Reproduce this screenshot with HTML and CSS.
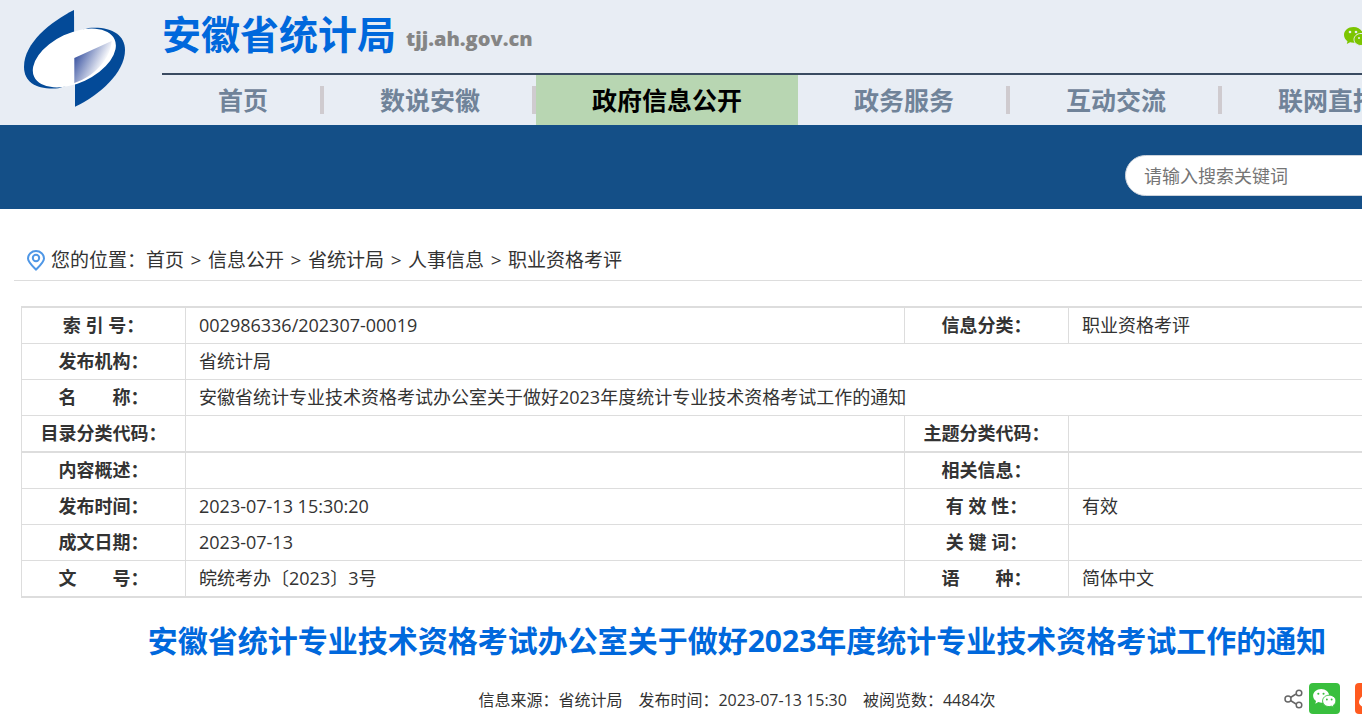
FILE: index.html
```html
<!DOCTYPE html>
<html lang="zh-CN">
<head>
    <meta charset="UTF-8">
    <meta name="viewport" content="width=device-width, initial-scale=1.0">
    <title>安徽省统计局</title>
    <link rel="stylesheet" href="styles.css">
</head>
<body>
    <div class="page">
        <header class="header">
            <a href="#" class="logo" aria-label="安徽省统计局">
                <svg width="101" height="97" viewBox="72 30 303 291">
                    <defs>
                        <linearGradient id="fold" gradientUnits="userSpaceOnUse" x1="215" y1="175" x2="300" y2="218">
                            <stop offset="0" stop-color="#2f4a9c"/>
                            <stop offset="1" stop-color="#ffffff"/>
                        </linearGradient>
                    </defs>
                    <path fill="#034a98" d="M222 30C150 66 72 130 72 200C72 248 112 270 175 265L223 250Z"/>
                    <path fill="#034a98" d="M225 320C298 286 375 218 375 150C375 102 330 78 265 84L225 98Z"/>
                    <ellipse cx="223" cy="174" rx="133" ry="75" transform="rotate(-25 223 174)" fill="#fff"/>
                    <path fill="url(#fold)" d="M223 174L335 123C332 175 285 228 223 249Z"/>
                </svg>
            </a>
            <div class="header-main">
                <div class="header-top">
                    <div class="site-name">
                        <span class="site-title">安徽省统计局</span>
                        <span class="site-domain">tjj.ah.gov.cn</span>
                    </div>
                    <a href="#" class="wechat-link" aria-label="微信">
                        <svg width="24" height="20" viewBox="0 0 24 20">
                            <path fill="#7cc500" d="M9.500 0C4.200 0 0 3.500 0 8c0 2.600 1.400 4.700 3.500 6.200L2.800 17l3.300-1.700 3.400.5C14.700 15.800 19 12.300 19 8S14.700 0 9.500 0z"/>
                            <path fill="#7cc500" stroke="#e8edf4" d="M17 6.500c-4 0-7 2.700-7 6s3 6 7 6l2.500-.4 2.300 1.300-.5-2.200c1.700-1.200 2.700-2.800 2.700-4.700 0-3.300-3-6-7-6z"/>
                            <circle cx="6" cy="5" r="1.300" fill="#e8edf4"/>
                            <circle cx="12" cy="5" r="1.300" fill="#e8edf4"/>
                            <circle cx="15" cy="11" r="1" fill="#e8edf4"/>
                            <circle cx="20" cy="11" r="1" fill="#e8edf4"/>
                        </svg>
                    </a>
                </div>
                <nav class="nav">
                    <a href="#">首页</a>
                    <a href="#">数说安徽</a>
                    <a href="#" class="active">政府信息公开</a>
                    <a href="#">政务服务</a>
                    <a href="#">互动交流</a>
                    <a href="#">联网直报</a>
                </nav>
            </div>
        </header>

        <div class="banner">
            <form class="search">
                <input type="text" placeholder="请输入搜索关键词" aria-label="搜索">
            </form>
        </div>

        <main class="content">
            <div class="breadcrumb">
                <svg class="pin" width="18" height="21" viewBox="0 0 18 21" fill="none" stroke="#4f97e6" stroke-width="2">
                    <path d="M9 19.500C5 15.500 1 12 1 8.500a8 7.500 0 0 1 16 0C17 12 13 15.500 9 19.500z"/>
                    <circle cx="9" cy="8" r="3.200"/>
                </svg>
                <span>您的位置：</span>
                <a href="#">首页</a><span class="sep">&gt;</span>
                <a href="#">信息公开</a><span class="sep">&gt;</span>
                <a href="#">省统计局</a><span class="sep">&gt;</span>
                <a href="#">人事信息</a><span class="sep">&gt;</span>
                <a href="#">职业资格考评</a>
            </div>

            <table class="info">
                <colgroup>
                    <col class="col-label">
                    <col class="col-wide">
                    <col class="col-label">
                    <col>
                </colgroup>
                <tbody>
                    <tr>
                        <th>索 引 号：</th>
                        <td>002986336/202307-00019</td>
                        <th>信息分类：</th>
                        <td>职业资格考评</td>
                    </tr>
                    <tr>
                        <th>发布机构：</th>
                        <td colspan="3">省统计局</td>
                    </tr>
                    <tr>
                        <th>名　　称：</th>
                        <td colspan="3">安徽省统计专业技术资格考试办公室关于做好2023年度统计专业技术资格考试工作的通知</td>
                    </tr>
                    <tr>
                        <th>目录分类代码：</th>
                        <td></td>
                        <th>主题分类代码：</th>
                        <td></td>
                    </tr>
                </tbody>
                <tbody>
                    <tr>
                        <th>内容概述：</th>
                        <td></td>
                        <th>相关信息：</th>
                        <td></td>
                    </tr>
                    <tr>
                        <th>发布时间：</th>
                        <td>2023-07-13 15:30:20</td>
                        <th>有 效 性：</th>
                        <td>有效</td>
                    </tr>
                    <tr>
                        <th>成文日期：</th>
                        <td>2023-07-13</td>
                        <th>关 键 词：</th>
                        <td></td>
                    </tr>
                    <tr>
                        <th>文　　号：</th>
                        <td>皖统考办〔2023〕3号</td>
                        <th>语　　种：</th>
                        <td>简体中文</td>
                    </tr>
                </tbody>
            </table>

            <h1>安徽省统计专业技术资格考试办公室关于做好2023年度统计专业技术资格考试工作的通知</h1>

            <div class="meta">
                <div class="meta-text">
                    <span>信息来源：省统计局</span>
                    <span>发布时间：2023-07-13 15:30</span>
                    <span>被阅览数：4484次</span>
                </div>
                <div class="share">
                    <svg width="19" height="20" viewBox="0 0 19 20" fill="none" stroke="#666" stroke-width="1.500">
                        <path d="M6.500 8.500L12 5M6.500 11.500L12 15"/>
                        <circle cx="4" cy="10" r="3"/>
                        <circle cx="15" cy="4" r="2.800"/>
                        <circle cx="15" cy="16" r="2.800"/>
                    </svg>
                    <button type="button" class="share-wechat" aria-label="分享到微信">
                        <svg width="23" height="19" viewBox="0 0 24 20">
                            <path fill="#fff" d="M8.500 0C3.800 0 0 3.200 0 7.200c0 2.300 1.200 4.200 3.100 5.500L2.300 15.500l3.200-1.700 3 .6c4.700 0 8.500-3.200 8.500-7.200S13.200 0 8.500 0z"/>
                            <path fill="#fff" stroke="#39bf3e" d="M17 6.500c-4 0-7 2.700-7 6s3 6 7 6l2.500-.4 2.300 1.300-.5-2.200c1.700-1.200 2.700-2.800 2.700-4.700 0-3.300-3-6-7-6z"/>
                            <circle cx="5.500" cy="5" r="1.100" fill="#39bf3e"/>
                            <circle cx="11" cy="5" r="1.100" fill="#39bf3e"/>
                            <circle cx="14.500" cy="11" r="1" fill="#39bf3e"/>
                            <circle cx="19.500" cy="11" r="1" fill="#39bf3e"/>
                        </svg>
                    </button>
                    <button type="button" class="share-weibo" aria-label="分享到微博">
                        <svg width="23" height="20" viewBox="0 0 23 20">
                            <path fill="#fff" d="M9 4C5 5 0 9 0 13c0 4 5 6 9.500 6C15 19 19 16 19 13c0-2-2-3-3.500-3.500C16 6 14 5.500 10.500 7 11 5 10.500 3.700 9 4z"/>
                            <ellipse cx="9" cy="13" rx="6" ry="4" fill="#ff5a1f"/>
                        </svg>
                    </button>
                </div>
            </div>
        </main>
    </div>
</body>
</html>
```
FILE: styles.css
```css
:root {
    --header-bg: #e8edf4;
    --band-blue: #144f87;
    --title-blue: #0068dc;
    --line: #dddddd;
    --text: #333333;
}

* {
    box-sizing: border-box;
}

body {
    margin: 0;
    overflow: hidden;
    font-family: "Open Sans", "Noto Sans CJK SC", sans-serif;
    font-size: 18px;
    color: var(--text);
    background: #fff;
}

a {
    color: inherit;
    text-decoration: none;
}

.page {
    min-width: 1474px;
}

.header {
    display: flex;
    background: var(--header-bg);
}

.logo {
    flex: 0 0 162px;
    padding: 10px 0 0 24px;
}

.logo svg,
.wechat-link svg {
    display: block;
}

.header-main {
    flex: 1;
}

.header-top {
    display: flex;
    justify-content: space-between;
    align-items: center;
    height: 75px;
    padding-right: 106px;
    border-bottom: 2px solid #3a4b61;
}

.site-name {
    display: flex;
    align-items: flex-end;
    gap: 10px;
    padding-bottom: 6px;
    font-weight: bold;
}

.site-title {
    font-size: 39px;
    line-height: 48px;
    color: var(--title-blue);
}

.site-domain {
    font-size: 20px;
    font-weight: 800;
    line-height: 38px;
    color: #858585;
}

.nav {
    display: flex;
    height: 50px;
}

.nav a {
    padding: 0 56px;
    font-size: 25px;
    font-weight: bold;
    line-height: 50px;
    white-space: nowrap;
    color: #708399;
    background: linear-gradient(#cfcbcf, #cfcbcf) right center / 4px 28px no-repeat;
}

.nav a.active {
    color: #000;
    background: #b8d6b2;
}

.banner {
    display: flex;
    justify-content: flex-end;
    padding: 30px 29px 13px;
    background: var(--band-blue);
}

.search input {
    display: block;
    width: 320px;
    height: 41px;
    padding: 0 18px;
    border: 1px solid #ccd3dc;
    border-radius: 21px;
    font: inherit;
    background: #fff;
}

.search input::placeholder {
    color: #757575;
}

.content {
    margin: 31px 14px 0;
}

.breadcrumb {
    display: flex;
    align-items: center;
    padding-left: 13px;
    border-bottom: 1px solid var(--line);
    font-size: 19px;
    line-height: 40px;
}

.pin {
    margin-right: 6px;
}

.sep {
    width: 24px;
    text-align: center;
}

.info {
    width: calc(100% - 14px);
    margin: 25px 7px 0;
    border-collapse: collapse;
    table-layout: fixed;
}

.col-label {
    width: 164px;
}

.col-wide {
    width: 719px;
}

.info tbody {
    border-top: 2px solid var(--line);
    border-bottom: 2px solid var(--line);
}

.info th,
.info td {
    height: 36px;
    padding: 0 13px;
    border: 1px solid var(--line);
    line-height: 34px;
    text-align: left;
}

.info th {
    padding: 0;
    text-align: center;
}

/* leaves room for the thicker line that closes each group */
.info tr:last-child td {
    height: 37px;
}

h1 {
    margin: 22px 0 0;
    font-size: 30px;
    line-height: 42px;
    text-align: center;
    color: var(--title-blue);
}

.meta {
    display: grid;
    grid-template-columns: 1fr auto 1fr;
    align-items: center;
    margin-top: 21px;
    font-size: 16px;
}

.meta-text {
    display: flex;
    grid-column: 2;
    gap: 16px;
}

.share {
    display: flex;
    align-items: center;
    justify-self: end;
    padding-right: 74px;
}

.share button {
    display: flex;
    align-items: center;
    justify-content: center;
    width: 31px;
    height: 31px;
    padding: 0;
    border: none;
    border-radius: 4px;
    cursor: pointer;
}

.share .share-wechat {
    margin: 0 15px 0 6px;
    background: #39bf3e;
}

.share .share-weibo {
    background: #ff5a1f;
}
```
